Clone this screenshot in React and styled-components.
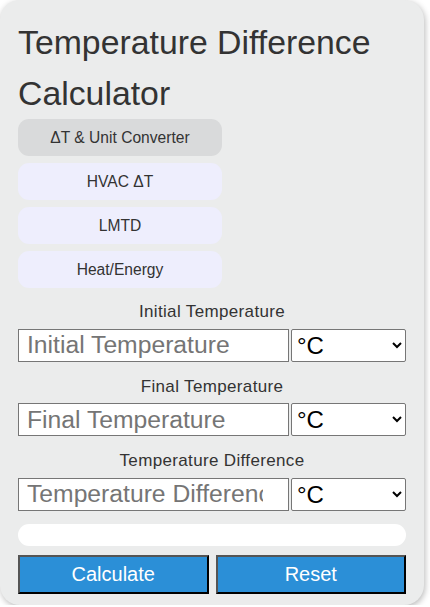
import React from "react";
import styled, { createGlobalStyle } from "styled-components";

const Global = createGlobalStyle`
  html, body { margin: 0; padding: 0; background: #ffffff; }
  body { font-family: "Liberation Sans", Arial, sans-serif; }
  * { box-sizing: border-box; }
`;

const Card = styled.div`
  width: 424px;
  height: 605px;
  background: #ebecec;
  border-radius: 20px;
  box-shadow: 1px 2px 6px rgba(0, 0, 0, 0.28);
  padding: 17px 18px 11px 18px;
  display: flex;
  flex-direction: column;
`;

const Title = styled.h1`
  margin: 0;
  font-size: 33.8px;
  font-weight: 400;
  line-height: 51.2px;
  color: #333333;
`;

const Tabs = styled.div`
  display: flex;
  flex-direction: column;
  gap: 7px;
  width: 204px;
`;

const Tab = styled.button`
  height: 37px;
  border: none;
  border-radius: 11px;
  background: ${(p) => (p.$active ? "#d9dadb" : "#eeeefd")};
  color: #333333;
  font-family: "Liberation Sans", Arial, sans-serif;
  font-size: 15.6px;
  padding: 0;
  cursor: pointer;
`;

const Group = styled.div`
  display: flex;
  flex-direction: column;
  margin-top: ${(p) => p.$top}px;
`;

const Label = styled.label`
  display: block;
  text-align: center;
  font-size: 17px;
  letter-spacing: 0.35px;
  line-height: 18.4px;
  color: #333333;
  margin-bottom: 7px;
`;

const Row = styled.div`
  display: flex;
  gap: 2px;
`;

const Input = styled.input`
  width: 271px;
  height: 33px;
  border: 1px solid #767676;
  border-radius: 0;
  padding: 0 25px 0 8px;
  font-family: "Liberation Sans", Arial, sans-serif;
  font-size: 24.7px;
  color: #000;
  background: #fff;
  &::placeholder { color: #757575; }
`;

const Select = styled.select`
  flex: 1;
  height: 33px;
  border: 1px solid #767676;
  border-radius: 2px;
  padding: 0 6px 0 1px;
  font-family: "Liberation Sans", Arial, sans-serif;
  font-size: 24px;
  color: #000;
  background: #fff;
`;

const Result = styled.div`
  height: 23px;
  margin-top: 13px;
  background: #ffffff;
  border-radius: 12px;
`;

const Buttons = styled.div`
  display: flex;
  gap: 7px;
  margin-top: 9px;
`;

const ActionButton = styled.button`
  flex: 1;
  height: 39px;
  background: #2b8fd7;
  color: #ffffff;
  font-family: "Liberation Sans", Arial, sans-serif;
  font-size: 20px;
  border-width: 2px;
  border-style: solid;
  border-color: #555555 #000000 #000000 #555555;
  border-radius: 0;
  padding: 0;
  cursor: pointer;
`;

const fields = [
  { label: "Initial Temperature", top: 15 },
  { label: "Final Temperature", top: 16 },
  { label: "Temperature Difference", top: 16 },
];

export default function App() {
  return (
    <>
      <Global />
      <Card>
        <Title>Temperature Difference Calculator</Title>
        <Tabs>
          <Tab $active>ΔT &amp; Unit Converter</Tab>
          <Tab>HVAC ΔT</Tab>
          <Tab>LMTD</Tab>
          <Tab>Heat/Energy</Tab>
        </Tabs>
        {fields.map((f) => (
          <Group key={f.label} $top={f.top}>
            <Label>{f.label}</Label>
            <Row>
              <Input placeholder={f.label} />
              <Select defaultValue="C">
                <option value="C">°C</option>
                <option value="F">°F</option>
                <option value="K">K</option>
              </Select>
            </Row>
          </Group>
        ))}
        <Result />
        <Buttons>
          <ActionButton>Calculate</ActionButton>
          <ActionButton>Reset</ActionButton>
        </Buttons>
      </Card>
    </>
  );
}
